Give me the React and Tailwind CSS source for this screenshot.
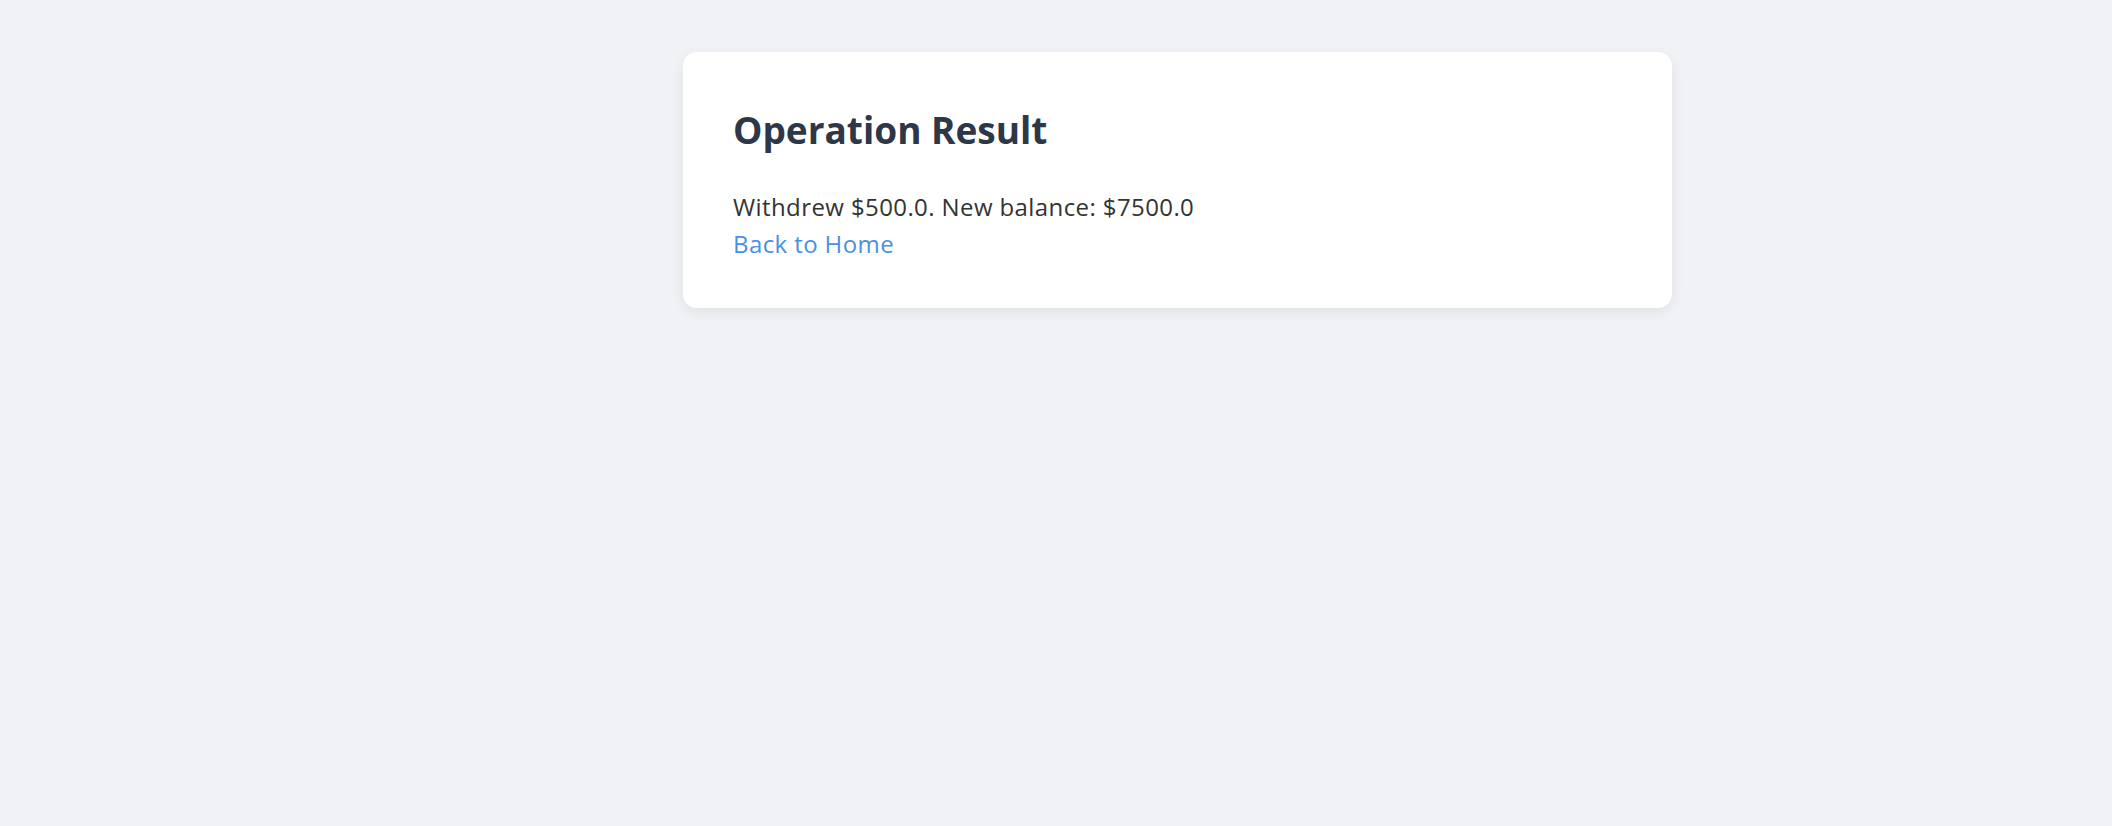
export default function App() {
  return (
    <div className="min-h-screen bg-[#f0f2f5] pt-[52px]" style={{ fontFamily: '"Open Sans", "Noto Sans", sans-serif' }}>
      <div className="ml-[683px] w-[989px] rounded-[14px] bg-white px-[50px] pt-[56px] pb-[46px] shadow-[0_4px_14px_rgba(0,0,0,0.07)]">
        <h1 className="text-[37px] leading-[44px] font-bold text-[#2d3748]">Operation Result</h1>
        <p className="mt-[36px] text-[24px] leading-[37px] tracking-[0.4px] text-[#333]">Withdrew $500.0. New balance: $7500.0</p>
        <a href="#" className="block text-[24px] leading-[37px] tracking-[0.4px] text-[#4a90e2]">Back to Home</a>
      </div>
    </div>
  )
}
